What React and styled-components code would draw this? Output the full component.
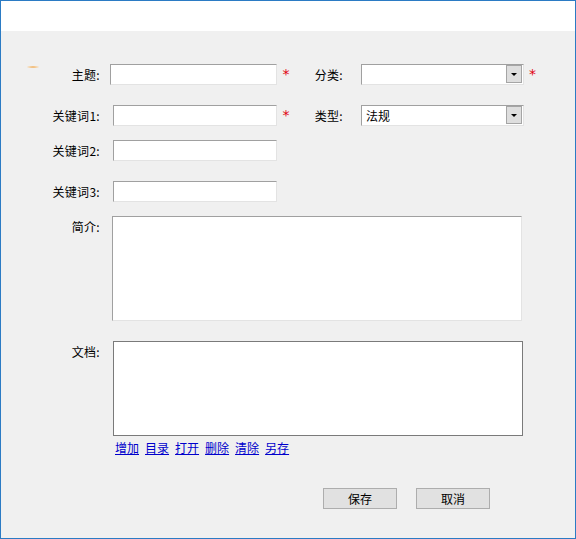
import React from "react";
import styled, { createGlobalStyle } from "styled-components";

const GlobalStyle = createGlobalStyle`
  html, body {
    margin: 0;
    padding: 0;
    background: #ffffff;
  }
  body {
    font-family: "Noto Sans CJK SC", "Liberation Sans", sans-serif;
    font-size: 12px;
    color: #000000;
  }
`;

const links = ["增加", "目录", "打开", "删除", "清除", "另存"];

export default function App() {
  return (
    <Window>
      <GlobalStyle />
      <TitleBar />
      <Content>
        <Row $top={33}>
          <Label $glint>主题:</Label>
          <TextInput $left={9} $w={167} />
          <Star $w={18}>*</Star>
          <SideLabel>分类:</SideLabel>
          <Select>
            <SelectValue />
            <ArrowBox>
              <Caret />
            </ArrowBox>
          </Select>
          <Star $w={17}>*</Star>
        </Row>

        <Row $top={20}>
          <Label>关键词1:</Label>
          <TextInput $left={12} $w={164} />
          <Star $w={18}>*</Star>
          <SideLabel>类型:</SideLabel>
          <Select>
            <SelectValue>法规</SelectValue>
            <ArrowBox>
              <Caret />
            </ArrowBox>
          </Select>
        </Row>

        <Row $top={14}>
          <Label>关键词2:</Label>
          <TextInput $left={12} $w={164} />
        </Row>

        <Row $top={20}>
          <Label>关键词3:</Label>
          <TextInput $left={12} $w={164} />
        </Row>

        <Row $top={14}>
          <Label>简介:</Label>
          <TextArea $left={11} $h={105} />
        </Row>

        <Row $top={20}>
          <Label>文档:</Label>
          <DocBox />
        </Row>

        <LinkBar>
          {links.map((l) => (
            <ActionLink key={l} href="#">
              {l}
            </ActionLink>
          ))}
        </LinkBar>

        <ButtonRow>
          <Button>保存</Button>
          <Button>取消</Button>
        </ButtonRow>
      </Content>
    </Window>
  );
}

const Window = styled.div`
  width: 576px;
  height: 539px;
  box-sizing: border-box;
  border: 1px solid #2b7bc4;
  background: #f0f0f0;
  display: flex;
  flex-direction: column;
`;

const TitleBar = styled.div`
  height: 30px;
  background: #ffffff;
  flex-shrink: 0;
`;

const Content = styled.div`
  display: flex;
  flex-direction: column;
`;

const Row = styled.div`
  display: flex;
  align-items: flex-start;
  margin-top: ${(p) => p.$top}px;
`;

const Label = styled.div`
  position: relative;
  width: 100px;
  flex-shrink: 0;
  box-sizing: border-box;
  padding-right: 1px;
  text-align: right;
  line-height: 21px;
  white-space: nowrap;
  letter-spacing: 0.3px;

  ${(p) =>
    p.$glint &&
    `
    &::before {
      content: "";
      position: absolute;
      left: 26px;
      top: 2px;
      width: 12px;
      height: 2px;
      border-radius: 50%;
      background: radial-gradient(ellipse at center, #e9a24a 0%, #f6d3a6 55%, rgba(240,240,240,0) 100%);
    }
  `}
`;

const fieldBorder = `
  border: 1px solid;
  border-color: #a0a0a0 #e3e3e3 #e3e3e3 #a0a0a0;
`;

const TextInput = styled.div`
  ${fieldBorder}
  box-sizing: border-box;
  height: 21px;
  width: ${(p) => p.$w}px;
  margin-left: ${(p) => p.$left}px;
  background: #ffffff;
`;

const Star = styled.span`
  width: ${(p) => p.$w}px;
  flex-shrink: 0;
  text-align: center;
  color: #e0000f;
  line-height: 21px;
  font-size: 14px;
  font-family: "DejaVu Sans", sans-serif;
`;

const SideLabel = styled.div`
  width: 48px;
  flex-shrink: 0;
  text-align: right;
  line-height: 21px;
  white-space: nowrap;
  letter-spacing: 0.3px;
  margin-right: 18px;
`;

const Select = styled.div`
  ${fieldBorder}
  box-sizing: border-box;
  width: 163px;
  height: 21px;
  background: #ffffff;
  display: flex;
  align-items: stretch;
`;

const SelectValue = styled.div`
  flex: 1;
  padding-left: 4px;
  line-height: 19px;
  font-size: 12px;
`;

const ArrowBox = styled.div`
  width: 16px;
  box-sizing: border-box;
  margin: 0 1px 1px 0;
  border: 1px solid #a5a5a5;
  background: #dedede;
  display: flex;
  align-items: center;
  justify-content: center;
`;

const Caret = styled.span`
  width: 0;
  height: 0;
  border-left: 3px solid transparent;
  border-right: 3px solid transparent;
  border-top: 3px solid #000000;
`;

const TextArea = styled.div`
  ${fieldBorder}
  box-sizing: border-box;
  width: 410px;
  height: ${(p) => p.$h}px;
  margin-left: ${(p) => p.$left}px;
  background: #ffffff;
`;

const DocBox = styled.div`
  box-sizing: border-box;
  width: 410px;
  height: 95px;
  margin-left: 12px;
  border: 1px solid #7a7a7a;
  background: #ffffff;
`;

const LinkBar = styled.div`
  display: flex;
  gap: 6px;
  margin-top: 4px;
  padding-left: 114px;
  line-height: 16px;
`;

const ActionLink = styled.a`
  color: #0000cc;
  text-decoration: underline;
  font-size: 12px;
`;

const ButtonRow = styled.div`
  display: flex;
  gap: 19px;
  margin-top: 32px;
  padding-left: 322px;
`;

const Button = styled.button`
  width: 74px;
  height: 21px;
  box-sizing: border-box;
  padding: 0;
  border: 1px solid #adadad;
  background: #e1e1e1;
  font-family: inherit;
  font-size: 12px;
  color: #000000;
  line-height: 19px;
`;
